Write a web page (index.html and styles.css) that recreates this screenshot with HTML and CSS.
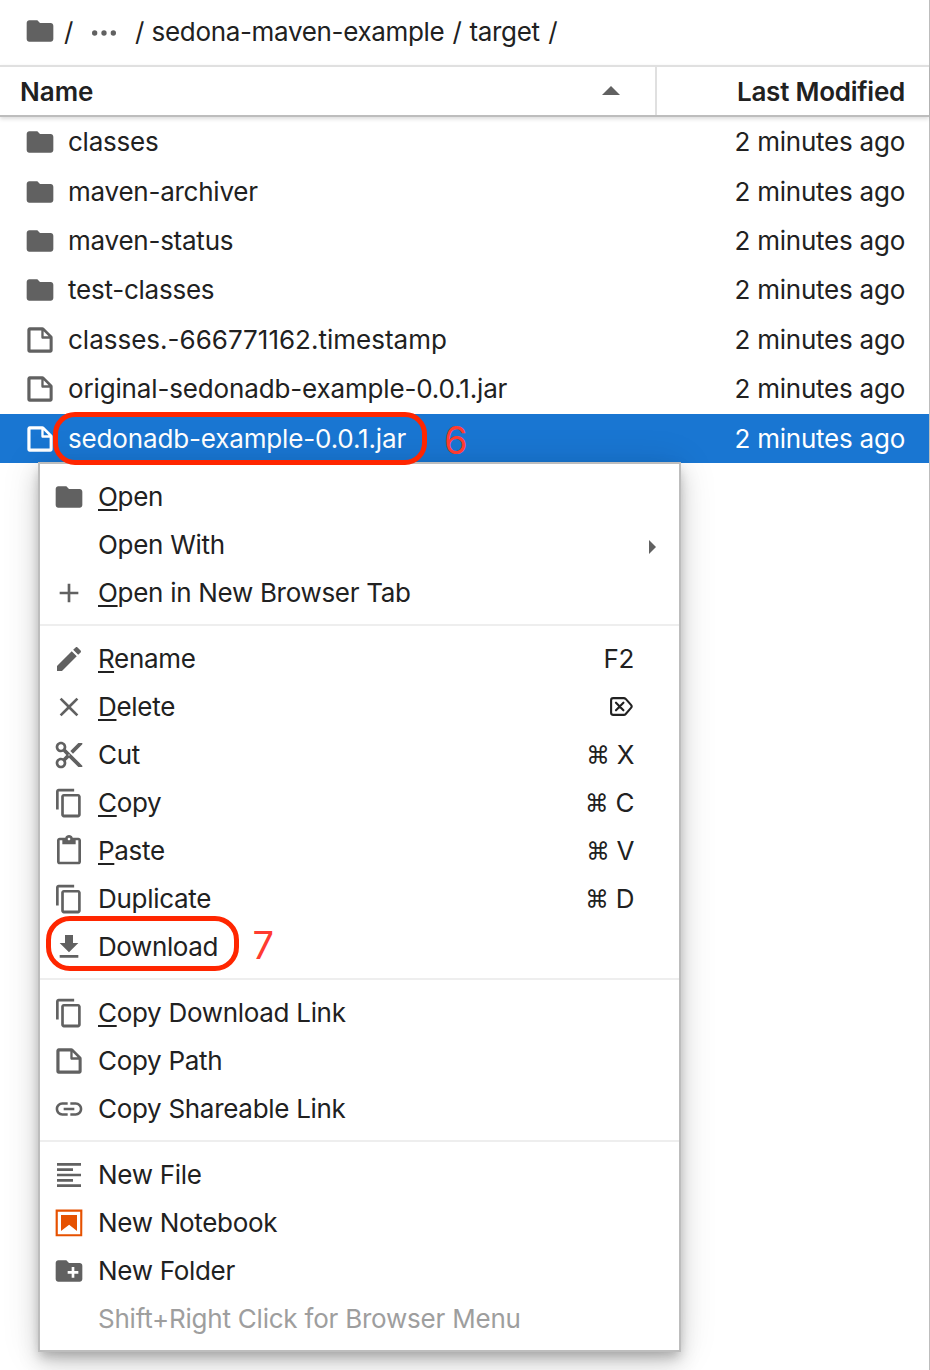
FILE: index.html
```html
<!DOCTYPE html>
<html lang="en">
<head>
<meta charset="utf-8">
<title>File Browser</title>
<link rel="stylesheet" href="styles.css">
</head>
<body>
<svg class="defs" width="0" height="0">
  <symbol id="folder" viewBox="0 0 24 24"><path d="M10 4H4c-1.1 0-1.99.9-1.99 2L2 18c0 1.1.9 2 2 2h16c1.1 0 2-.9 2-2V8c0-1.1-.9-2-2-2h-8l-2-2z"/></symbol>
  <symbol id="file" viewBox="0 0 22 22"><path d="M19.3 8.2l-5.5-5.5c-.3-.3-.7-.5-1.2-.5H3.9c-.8.1-1.6.9-1.6 1.8v14.1c0 .9.7 1.6 1.6 1.6h14.2c.9 0 1.6-.7 1.6-1.6V9.4c.1-.5-.1-.9-.4-1.2zm-5.8-3.3l3.4 3.6h-3.4V4.9zm3.9 12.7H4.7c-.1 0-.2 0-.2-.2V4.7c0-.2.1-.3.2-.3h7.2v4.4s0 .8.3 1.1c.3.3 1.1.3 1.1.3h4.3v7.2s-.1.2-.2.2z"/></symbol>
  <symbol id="copy" viewBox="0 0 18 18"><path d="M11.9 1H3.2c-.8 0-1.5.7-1.5 1.5v10.2h1.5V2.5h8.7V1zM14.1 3.9h-8c-.8 0-1.5.7-1.5 1.5v10.2c0 .8.7 1.5 1.5 1.5h8c.8 0 1.5-.7 1.5-1.5V5.4c-.1-.8-.7-1.5-1.5-1.5zM14.1 15.5h-8V5.4h8v10.1z"/></symbol>
</svg>
<main class="browser">
  <nav class="crumbs">
    <svg class="icon"><use href="#folder"/></svg>
    <span class="slash s1">/</span>
    <svg class="icon dots" viewBox="0 0 24 24"><circle cx="5" cy="12" r="2"/><circle cx="12" cy="12" r="2"/><circle cx="19" cy="12" r="2"/></svg>
    <span class="slash s2">/</span>
    <span class="crumb">sedona-maven-example</span>
    <span class="slash s3">/</span>
    <span class="crumb">target</span>
    <span class="slash s4">/</span>
  </nav>
  <header class="head">
    <div class="head-name"><span>Name</span><svg class="caret-up" viewBox="0 0 18 9"><path d="M0 9L9 0l9 9z"/></svg></div>
    <div class="head-date"><span>Last Modified</span></div>
  </header>
  <ul class="list">
    <li class="row"><svg class="icon"><use href="#folder"/></svg><span class="name">classes</span><span class="date">2 minutes ago</span></li>
    <li class="row"><svg class="icon"><use href="#folder"/></svg><span class="name">maven-archiver</span><span class="date">2 minutes ago</span></li>
    <li class="row"><svg class="icon"><use href="#folder"/></svg><span class="name">maven-status</span><span class="date">2 minutes ago</span></li>
    <li class="row"><svg class="icon"><use href="#folder"/></svg><span class="name">test-classes</span><span class="date">2 minutes ago</span></li>
    <li class="row"><svg class="icon"><use href="#file"/></svg><span class="name stamp">classes.-666771162.timestamp</span><span class="date">2 minutes ago</span></li>
    <li class="row"><svg class="icon"><use href="#file"/></svg><span class="name jar">original-sedonadb-example-0.0.1.jar</span><span class="date">2 minutes ago</span></li>
    <li class="row selected"><svg class="icon"><use href="#file"/></svg><span class="name jar">sedonadb-example-0.0.1.jar</span><span class="date">2 minutes ago</span></li>
  </ul>
</main>

<div class="menu">
  <div class="item"><svg class="icon"><use href="#folder"/></svg><span class="label"><u>O</u>pen</span></div>
  <div class="item"><span class="icon"></span><span class="label">Open With</span><svg class="caret-right" viewBox="0 0 7 14"><path d="M0 0l7 7-7 7z"/></svg></div>
  <div class="item"><svg class="icon" viewBox="0 0 24 24"><path d="M19 13h-6v6h-2v-6H5v-2h6V5h2v6h6v2z"/></svg><span class="label"><u>O</u>pen in New Browser Tab</span></div>
  <hr class="sep">
  <div class="item"><svg class="icon" viewBox="0 0 24 24"><path d="M3 17.25V21h3.75L17.81 9.94l-3.75-3.75L3 17.25zM20.71 7.04c.39-.39.39-1.02 0-1.41l-2.34-2.34c-.39-.39-1.02-.39-1.41 0l-1.83 1.83 3.75 3.75 1.83-1.83z"/></svg><span class="label"><u>R</u>ename</span><span class="key">F2</span></div>
  <div class="item"><svg class="icon" viewBox="0 0 24 24"><path d="M19 6.41L17.59 5 12 10.59 6.41 5 5 6.41 10.59 12 5 17.59 6.41 19 12 13.41 17.59 19 19 17.59 13.41 12z"/></svg><span class="label"><u>D</u>elete</span><svg class="erase" viewBox="0 0 23 19"><path d="M3.2 1.1h10.6c.8 0 1.4.3 1.9.8l5.3 6c.8.9.8 2.1 0 3l-5.3 6.1c-.5.6-1.1.9-1.9.9H3.2c-1.3 0-2.1-.8-2.1-2.1V3.2c0-1.3.8-2.1 2.1-2.1zM6 5.7l7.4 7.6M13.4 5.7L6 13.3"/></svg></div>
  <div class="item"><svg class="icon" viewBox="0 0 24 24"><path d="M9.64 7.64c.23-.5.36-1.05.36-1.64 0-2.21-1.79-4-4-4S2 3.79 2 6s1.79 4 4 4c.59 0 1.14-.13 1.64-.36L10 12l-2.36 2.36C7.14 14.13 6.59 14 6 14c-2.21 0-4 1.79-4 4s1.79 4 4 4 4-1.79 4-4c0-.59-.13-1.14-.36-1.64L12 14l7 7h3v-1L9.64 7.64zM6 8c-1.1 0-2-.89-2-2s.9-2 2-2 2 .89 2 2-.9 2-2 2zm0 12c-1.1 0-2-.89-2-2s.9-2 2-2 2 .89 2 2-.9 2-2 2zm6-7.5c-.28 0-.5-.22-.5-.5s.22-.5.5-.5.5.22.5.5-.22.5-.5.5zM19 3l-6 6 2 2 7-7V3z"/></svg><span class="label">Cut</span><span class="key"><span class="cmd">⌘</span> X</span></div>
  <div class="item"><svg class="icon"><use href="#copy"/></svg><span class="label"><u>C</u>opy</span><span class="key"><span class="cmd">⌘</span> C</span></div>
  <div class="item"><svg class="icon" viewBox="0 0 24 24"><path d="M19 2h-4.18C14.4.84 13.3 0 12 0c-1.3 0-2.4.84-2.82 2H5c-1.1 0-2 .9-2 2v16c0 1.1.9 2 2 2h14c1.1 0 2-.9 2-2V4c0-1.1-.9-2-2-2zm-7 0c.55 0 1 .45 1 1s-.45 1-1 1-1-.45-1-1 .45-1 1-1zm7 18H5V4h2v3h10V4h2v16z"/></svg><span class="label"><u>P</u>aste</span><span class="key"><span class="cmd">⌘</span> V</span></div>
  <div class="item"><svg class="icon"><use href="#copy"/></svg><span class="label">Duplicate</span><span class="key"><span class="cmd">⌘</span> D</span></div>
  <div class="item"><svg class="icon" viewBox="0 0 24 24"><path d="M19 9h-4V3H9v6H5l7 7 7-7zM5 18v2h14v-2H5z"/></svg><span class="label tight">Download</span></div>
  <hr class="sep">
  <div class="item"><svg class="icon"><use href="#copy"/></svg><span class="label"><u>C</u>opy Download Link</span></div>
  <div class="item"><svg class="icon"><use href="#file"/></svg><span class="label">Copy Path</span></div>
  <div class="item"><svg class="icon" viewBox="0 0 24 24"><path d="M3.9 12c0-1.71 1.39-3.1 3.1-3.1h4V7H7c-2.76 0-5 2.24-5 5s2.24 5 5 5h4v-1.9H7c-1.71 0-3.1-1.39-3.1-3.1zM8 13h8v-2H8v2zm9-6h-4v1.9h4c1.71 0 3.1 1.39 3.1 3.1s-1.39 3.1-3.1 3.1h-4V17h4c2.76 0 5-2.24 5-5s-2.24-5-5-5z"/></svg><span class="label">Copy Shareable Link</span></div>
  <hr class="sep">
  <div class="item"><svg class="icon" viewBox="0 0 24 24"><path d="M15 15H3v2h12v-2zm0-8H3v2h12V7zM3 13h18v-2H3v2zm0 8h18v-2H3v2zM3 3v2h18V3H3z"/></svg><span class="label">New File</span></div>
  <div class="item"><svg class="icon notebook" viewBox="0 0 22 22"><path d="M18.7 3.3v15.4H3.3V3.3h15.4m1.5-1.5H1.8v18.3h18.3l.1-18.3z"/><path d="M16.5 16.5l-5.4-4.3-5.6 4.3v-11h11z"/></svg><span class="label">New Notebook</span></div>
  <div class="item"><svg class="icon" viewBox="0 0 24 24"><path d="M20 6h-8l-2-2H4c-1.11 0-1.99.89-1.99 2L2 18c0 1.11.89 2 2 2h16c1.11 0 2-.89 2-2V8c0-1.11-.89-2-2-2zm-1 8h-3v3h-2v-3h-3v-2h3V9h2v3h3v2z"/></svg><span class="label">New Folder</span></div>
  <div class="item disabled"><span class="icon"></span><span class="label hint">Shift+Right Click for Browser Menu</span></div>
</div>

<div class="ring ring-file"></div>
<div class="step step-6">6</div>
<div class="ring ring-download"></div>
<div class="step step-7">7</div>
</body>
</html>
```

FILE: styles.css
```css
* { box-sizing: border-box; }

body {
  margin: 0;
  width: 930px;
  height: 1370px;
  position: relative;
  overflow: hidden;
  background: #fff;
  color: #212121;
  font-family: Inter, "Liberation Sans", sans-serif;
  font-size: 26px;
  line-height: 32px;
  letter-spacing: -0.24px;
}

.defs { position: absolute; }

.icon {
  display: block;
  flex: none;
  width: 32px;
  height: 32px;
  fill: #616161;
}

.browser {
  height: 1370px;
  border-right: 1px solid #bdbdbd;
}

.crumbs {
  display: flex;
  height: 65px;
  padding: 15px 0 0 24px;
  letter-spacing: -0.33px;
}

.s1 { margin-left: 8px; }
.dots { margin: 2px 0 0 15px; }
.s2 { margin: 0 7.5px 0 15px; }
.s3 { margin: 0 8px; }
.s4 { margin-left: 8.5px; }

.slash, .crumb { padding-top: 0.6px; }

.head {
  display: flex;
  height: 52px;
  border-top: 2px solid #e0e0e0;
  border-bottom: 2px solid #bdbdbd;
  box-shadow: 0 2px 4px rgba(0, 0, 0, 0.14);
  font-weight: 600;
}

.head-name {
  display: flex;
  justify-content: space-between;
  align-items: center;
  width: 657px;
  padding: 2px 35px 0 20px;
  border-right: 2px solid #e0e0e0;
  letter-spacing: 0;
}

.caret-up { width: 18px; height: 9px; fill: #616161; margin-top: -3px; }

.head-date {
  flex: 1;
  padding: 9px 24px 0 0;
  text-align: right;
}

.list { margin: 0; padding: 0.5px 0 0; list-style: none; }

.row {
  display: flex;
  align-items: center;
  height: 49.42px;
  padding: 0 24px;
}

.name { flex: 1; margin-left: 12px; }
.name.stamp { letter-spacing: 0; }
.name.jar { letter-spacing: -0.15px; }

.selected { background: #1976d2; color: #fff; }
.selected .icon { fill: #fff; }

.menu {
  position: absolute;
  left: 38px;
  top: 462px;
  width: 643px;
  height: 890px;
  padding: 8px 0;
  background: #fff;
  border: 2px solid #bdbdbd;
  box-shadow: 0 6px 10px -2px rgba(0, 0, 0, 0.2), 0 12px 20px rgba(0, 0, 0, 0.14), 0 2px 36px rgba(0, 0, 0, 0.12);
}

.item {
  display: flex;
  align-items: center;
  height: 48px;
  padding: 2px 44px 0 13px;
}

.label { flex: 1; margin-left: 13px; letter-spacing: -0.3px; }
.label.tight { letter-spacing: -0.4px; }
.label.hint { letter-spacing: -0.22px; }

.label u { text-decoration-thickness: 2px; text-underline-offset: 3px; }

.key { margin-right: 0.8px; }

.cmd { font-size: 23.5px; line-height: 1; vertical-align: 1px; }

.erase {
  width: 23px;
  height: 19px;
  margin: -1px 2px 0 0;
  fill: none;
  stroke: #212121;
  stroke-width: 2.1;
  stroke-linecap: round;
  stroke-linejoin: round;
}

.caret-right { width: 7px; height: 14px; fill: #616161; margin: 2px -21px -2px 0; }

.sep {
  height: 2px;
  margin: 8px 0;
  border: 0;
  background: #eee;
}

.notebook { fill: #e65100; }
.disabled { color: #9e9e9e; }

.ring {
  position: absolute;
  border: 5px solid #ff2600;
}

.ring-file { left: 53px; top: 412px; width: 374px; height: 53px; border-radius: 22px; }
.ring-download { left: 46px; top: 916px; width: 193px; height: 55px; border-radius: 24px; }

.step {
  position: absolute;
  color: #ff3b30;
  font-size: 38px;
  line-height: 46px;
}

.step-6 { left: 444px; top: 417px; }
.step-7 { left: 252.5px; top: 922px; }
```
